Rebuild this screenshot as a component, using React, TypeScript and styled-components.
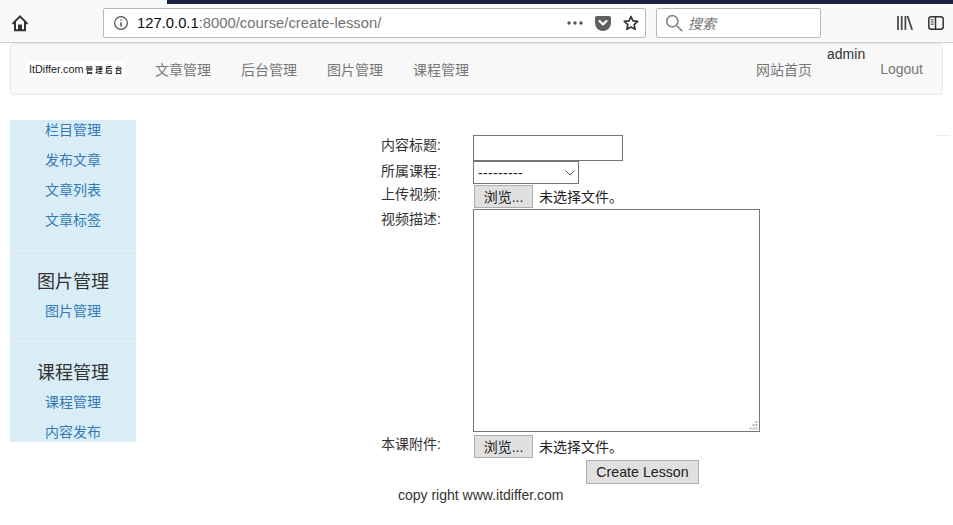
import React from 'react';
import styled, { createGlobalStyle } from 'styled-components';

const sans = '"Liberation Sans", Arial, "Noto Sans CJK SC", sans-serif';

const GlobalStyle = createGlobalStyle`
  html, body {
    margin: 0;
    padding: 0;
    background: #fff;
    overflow: hidden;
  }
  body {
    font-family: ${sans};
    font-size: 14px;
    color: #333;
  }
  * {
    box-sizing: border-box;
  }
`;

const HomeIcon = () => (
  <svg width="18" height="18" viewBox="0 0 18 18">
    <path
      d="M9 1 .8 9.200l1.400 1.400.8-.8V16.500a.8.800 0 0 0 .8.800h10.400a.8.800 0 0 0 .8-.8V9.800l.8.8 1.400-1.400z"
      fill="#333"
    />
    <path d="M9 3.800 5 7.800v7.500h2V10.500h4v4.800h2V7.800z" fill="#f9f9fa" />
    <rect x="7.800" y="12" width="2.400" height="3.300" fill="#333" />
  </svg>
);

const InfoIcon = () => (
  <svg width="16" height="16" viewBox="0 0 16 16" fill="none" stroke="#555" strokeWidth="1.200">
    <circle cx="8" cy="8" r="6.400" />
    <path d="M8 7.200v4.200M8 4.400v1.400" strokeWidth="1.500" />
  </svg>
);

const DotsIcon = () => (
  <svg width="16" height="4" viewBox="0 0 16 4" fill="#555">
    <circle cx="2" cy="2" r="1.700" />
    <circle cx="8" cy="2" r="1.700" />
    <circle cx="14" cy="2" r="1.700" />
  </svg>
);

const PocketIcon = () => (
  <svg width="16" height="15" viewBox="0 0 16 15">
    <path d="M2 0h12a2 2 0 0 1 2 2v5a8 8 0 0 1-16 0V2a2 2 0 0 1 2-2z" fill="#5f5f60" />
    <path
      d="M4.500 5 8 8.400 11.500 5"
      fill="none"
      stroke="#f9f9fa"
      strokeWidth="2.200"
      strokeLinecap="round"
      strokeLinejoin="round"
    />
  </svg>
);

const StarIcon = () => (
  <svg width="16" height="16" viewBox="0 0 16 16" fill="none" stroke="#333" strokeWidth="1.700" strokeLinejoin="round">
    <path d="M8 1.500 10 5.800l4.700.6-3.500 3.200.9 4.700L8 12l-4.100 2.300.9-4.700L1.300 6.400 6 5.800z" />
  </svg>
);

const SearchIcon = () => (
  <svg width="18" height="18" viewBox="0 0 18 18" fill="none" stroke="#8a8a8a" strokeWidth="1.700">
    <circle cx="7.300" cy="7.300" r="5.600" />
    <path d="m11.500 11.500 5.200 5.200" strokeLinecap="round" />
  </svg>
);

const LibraryIcon = () => (
  <svg width="16" height="14" viewBox="0 0 16 14" fill="none" stroke="#444" strokeWidth="1.700">
    <path d="M1 0v14M4.700 0v14M8.400 0v14M10.500 0l4.700 14" />
  </svg>
);

const SidebarIcon = () => (
  <svg width="16" height="14" viewBox="0 0 16 14" fill="none" stroke="#333" strokeWidth="1.500">
    <rect x="0.800" y="0.800" width="14.400" height="12.400" rx="2.500" />
    <path d="M7.500 1v12" />
    <path d="M2.800 3.800h2.800M2.800 6h2.800M2.800 8.200h2.800" strokeWidth="1" />
  </svg>
);

const ChevronIcon = () => (
  <svg width="10" height="6" viewBox="0 0 10 6" fill="none" stroke="#555" strokeWidth="1">
    <path d="M.5.500 5 5 9.500.500" />
  </svg>
);

const GripIcon = () => (
  <svg width="9" height="9" viewBox="0 0 9 9" fill="#b5b5b5">
    <rect x="6.500" y="0" width="2" height="2" />
    <rect x="3.500" y="3" width="2" height="2" />
    <rect x="6.500" y="3" width="2" height="2" />
    <rect x="0.500" y="6.500" width="2" height="2" />
    <rect x="3.500" y="6.500" width="2" height="2" />
    <rect x="6.500" y="6.500" width="2" height="2" />
  </svg>
);

const NavGroups = ['文章管理', '后台管理', '图片管理', '课程管理'];

const App: React.FC = () => {
  return (
    <>
      <GlobalStyle />
      <ChromeBar>
        <TitleStrip />
        <ToolRow>
          <HomeButton>
            <HomeIcon />
          </HomeButton>
          <UrlBox>
            <InfoIcon />
            <UrlText>
              <strong>127.0.0.1</strong>:8000/course/create-lesson/
            </UrlText>
            <UrlActions>
              <DotsIcon />
              <PocketIcon />
              <StarIcon />
            </UrlActions>
          </UrlBox>
          <SearchBox>
            <SearchIcon />
            <SearchText>搜索</SearchText>
          </SearchBox>
          <RightTools>
            <LibraryIcon />
            <SidebarIcon />
          </RightTools>
        </ToolRow>
      </ChromeBar>

      <Navbar>
        <Logo>
          ItDiffer.com<LogoCn>管理后台</LogoCn>
        </Logo>
        <NavLinks>
          {NavGroups.map((item) => (
            <NavLink key={item}>{item}</NavLink>
          ))}
        </NavLinks>
        <NavRight>
          <NavLink>网站首页</NavLink>
          <UserName>admin</UserName>
          <NavLink>Logout</NavLink>
        </NavRight>
      </Navbar>

      <Main>
        <Sidebar>
          <SideGroup>
            <SideLink>栏目管理</SideLink>
            <SideLink>发布文章</SideLink>
            <SideLink>文章列表</SideLink>
            <SideLink>文章标签</SideLink>
          </SideGroup>
          <SideGroup>
            <SideTitle>图片管理</SideTitle>
            <SideLink>图片管理</SideLink>
          </SideGroup>
          <SideGroup $last>
            <SideTitle>课程管理</SideTitle>
            <SideLink>课程管理</SideLink>
            <SideLink>内容发布</SideLink>
          </SideGroup>
        </Sidebar>

        <FormColumn>
          <Row $height={26}>
            <FieldLabel>内容标题:</FieldLabel>
            <TextInput type="text" />
          </Row>
          <Row $height={24}>
            <FieldLabel>所属课程:</FieldLabel>
            <SelectWrap>
              <SelectBox>
                <option>---------</option>
              </SelectBox>
              <SelectArrow>
                <ChevronIcon />
              </SelectArrow>
            </SelectWrap>
          </Row>
          <Row $height={24}>
            <FieldLabel $raised>上传视频:</FieldLabel>
            <FileField>
              <BrowseButton type="button">浏览...</BrowseButton>
              <FileName>未选择文件。</FileName>
            </FileField>
          </Row>
          <Row $height={226}>
            <FieldLabel>视频描述:</FieldLabel>
            <AreaWrap>
              <DescArea />
              <AreaGrip>
                <GripIcon />
              </AreaGrip>
            </AreaWrap>
          </Row>
          <Row $height={25}>
            <FieldLabel $raised>本课附件:</FieldLabel>
            <FileField>
              <BrowseButton type="button">浏览...</BrowseButton>
              <FileName>未选择文件。</FileName>
            </FileField>
          </Row>
          <SubmitRow>
            <SubmitButton type="button">Create Lesson</SubmitButton>
          </SubmitRow>
          <Footer>copy right www.itdiffer.com</Footer>
        </FormColumn>

        <FaintRule />
      </Main>
    </>
  );
};

export default App;

const ChromeBar = styled.div`
  height: 43px;
  background: #f9f9fa;
  border-bottom: 1px solid #cfcfcf;
`;

const TitleStrip = styled.div`
  height: 4px;
  margin-left: 167px;
  background: #1b2142;
`;

const ToolRow = styled.div`
  display: flex;
  align-items: center;
  height: 30px;
  margin-top: 4px;
`;

const HomeButton = styled.div`
  display: flex;
  justify-content: center;
  width: 40px;
  margin-right: 63px;
`;

const UrlBox = styled.div`
  display: flex;
  align-items: center;
  width: 543px;
  height: 30px;
  padding: 0 6px 0 9px;
  background: #fff;
  border: 1px solid #b9b9bb;
  border-radius: 2px;
`;

const UrlText = styled.div`
  flex: 1;
  margin-left: 8px;
  font-size: 14.800px;
  color: #737373;

  strong {
    font-weight: 400;
    color: #0c0c0d;
  }
`;

const UrlActions = styled.div`
  display: flex;
  align-items: center;
  gap: 12px;
`;

const SearchBox = styled.div`
  display: flex;
  align-items: center;
  width: 165px;
  height: 30px;
  margin-left: 10px;
  padding-left: 8px;
  background: #fff;
  border: 1px solid #b9b9bb;
  border-radius: 2px;
`;

const SearchText = styled.span`
  margin-left: 5px;
  font-size: 14px;
  font-style: italic;
  color: #737373;
`;

const RightTools = styled.div`
  display: flex;
  align-items: center;
  gap: 15px;
  margin-left: 76px;
`;

const Navbar = styled.div`
  display: flex;
  align-items: center;
  height: 52px;
  margin: 0 10px;
  padding: 0 19px 0 15px;
  background: #f8f8f8;
  border: 1px solid #e7e7e7;
  border-radius: 4px;
`;

const Logo = styled.div`
  display: flex;
  align-items: center;
  width: 100px;
  height: 16px;
  padding-left: 3px;
  background: #fff;
  font-size: 10.800px;
  white-space: nowrap;
  color: #222;
`;

const LogoCn = styled.span`
  margin-left: 2px;
  font-size: 7.500px;
  letter-spacing: 2.300px;
  font-weight: 700;
`;

const NavLinks = styled.div`
  display: flex;
  gap: 30px;
  margin-left: 29px;
`;

const NavLink = styled.a`
  font-size: 14px;
  color: #777;
`;

const NavRight = styled.div`
  display: flex;
  align-items: center;
  margin-left: auto;
`;

const UserName = styled.span`
  margin: -30px 15px 0;
  font-size: 14px;
  color: #333;
`;

const Main = styled.div`
  display: flex;
  align-items: flex-start;
  padding: 25px 3px 0 10px;
`;

const Sidebar = styled.div`
  width: 126px;
  height: 322px;
  overflow: hidden;
  background: #d9edf7;
  text-align: center;
`;

const SideGroup = styled.div<{ $last?: boolean }>`
  padding-bottom: ${(p) => (p.$last ? 0 : 10)}px;
  border-bottom: ${(p) => (p.$last ? 'none' : '1px solid #e8f1f5')};

  & + & {
    padding-top: 15px;
  }
`;

const SideTitle = styled.div`
  height: 35px;
  font-size: 18px;
  line-height: 32px;
  color: #333;
`;

const SideLink = styled.div`
  height: 30px;
  font-size: 14px;
  line-height: 20px;
  color: #337ab7;
`;

const FormColumn = styled.div`
  width: 400px;
  margin-left: 245px;
  padding-top: 15px;
`;

const Row = styled.div<{ $height: number }>`
  display: flex;
  align-items: flex-start;
  height: ${(p) => p.$height}px;
`;

const FieldLabel = styled.label<{ $raised?: boolean }>`
  width: 92px;
  padding-top: ${(p) => (p.$raised ? 1 : 2)}px;
  font-size: 14px;
  line-height: 16px;
  color: #333;
`;

const TextInput = styled.input`
  width: 150px;
  height: 26px;
  padding: 1px 2px;
  background: #fff;
  border: 1px solid #767676;
`;

const SelectWrap = styled.div`
  position: relative;
  width: 106px;
  height: 23px;
`;

const SelectBox = styled.select`
  appearance: none;
  display: block;
  width: 100%;
  height: 100%;
  padding: 0 0 0 4px;
  background: #fff;
  border: 1px solid #767676;
  border-radius: 0;
  outline: none;
  font-family: ${sans};
  font-size: 14px;
  letter-spacing: 0.350px;
  color: #222;
`;

const SelectArrow = styled.span`
  position: absolute;
  top: 9px;
  right: 4px;
  display: flex;
  pointer-events: none;
`;

const FileField = styled.div`
  display: flex;
  align-items: center;
  padding-left: 1px;
`;

const BrowseButton = styled.button`
  width: 59px;
  height: 23px;
  padding: 0 0 2px;
  background: #e0e0e0;
  border: 1px solid #adadad;
  font-family: ${sans};
  font-size: 14px;
  color: #222;
`;

const FileName = styled.span`
  margin: -2px 0 0 6px;
  font-size: 14px;
  color: #222;
`;

const AreaWrap = styled.div`
  position: relative;
  width: 287px;
  height: 223px;
`;

const DescArea = styled.textarea`
  display: block;
  width: 100%;
  height: 100%;
  resize: none;
  background: #fff;
  border: 1px solid #767676;
  border-radius: 0;
`;

const AreaGrip = styled.span`
  position: absolute;
  right: 2px;
  bottom: 2px;
  display: flex;
  pointer-events: none;
`;

const SubmitRow = styled.div`
  display: flex;
  padding-left: 205px;
`;

const SubmitButton = styled.button`
  width: 113px;
  height: 24px;
  padding: 0;
  background: #e0e0e0;
  border: 1px solid #adadad;
  font-family: ${sans};
  font-size: 14.200px;
  color: #222;
`;

const Footer = styled.div`
  margin-top: 3px;
  padding-left: 17px;
  font-size: 14px;
  line-height: 16px;
  color: #333;
`;

const FaintRule = styled.div`
  width: 15px;
  height: 1px;
  margin: 15px 0 0 auto;
  background: #eee;
`;
